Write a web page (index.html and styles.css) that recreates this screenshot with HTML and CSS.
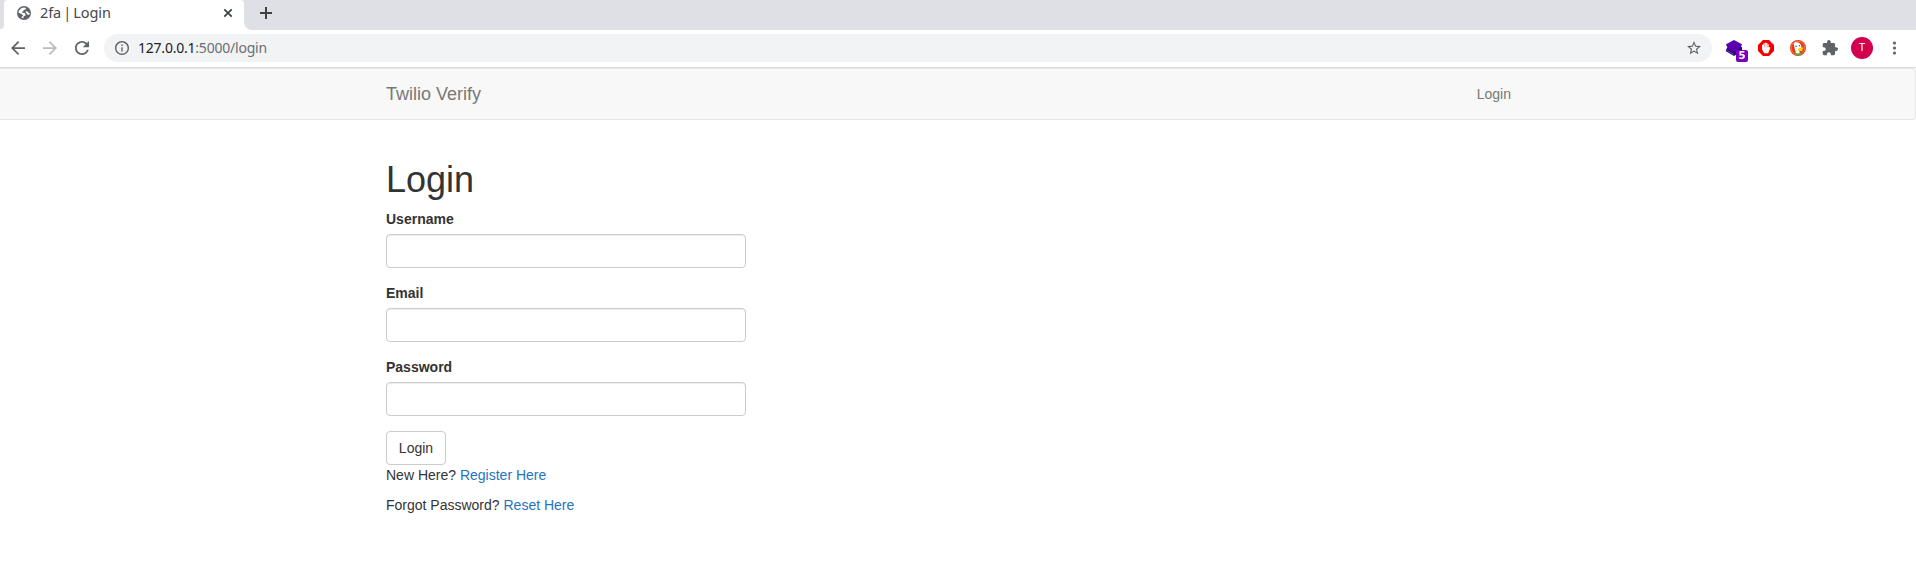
FILE: index.html
```html
<!DOCTYPE html>
<html lang="en">
<head>
<meta charset="utf-8">
<title>2fa | Login</title>
<link rel="stylesheet" href="styles.css">
</head>
<body>
<header class="browser">
  <div class="tabstrip">
    <div class="strip-start"></div>
    <div class="tab">
      <svg class="favicon" viewBox="0 0 14 14"><circle cx="7" cy="7" r="7" fill="#5f6368"/><path fill="#fff" d="M1.400 6.600C1.700 3.900 3.900 1.700 7 1.400L9 2 8.600 3.400 6.600 3.900 6.500 5.300 5 5.800 5.300 6.800 7.600 6.900 8.600 8.300 8.300 9.700 6.800 10.100 6.300 12.300 4.600 12 4.800 10.700 6.200 9.600 4.900 8.300z"/><path fill="#fff" d="M8.300 5.600L10.200 5.200 11.200 6.600 12.700 6.900 12.200 8.900 10.400 8.500 9.300 7.100z"/></svg>
      <span class="tab-title">2fa <i>|</i> Login</span>
      <svg class="tab-close" viewBox="0 0 10 10"><path d="M1.300 1.300l7.400 7.400M8.700 1.300L1.300 8.700" stroke="#3c4043" stroke-width="1.700"/></svg>
    </div>
    <div class="strip-end">
      <svg class="new-tab" viewBox="0 0 12 12"><path d="M6 0v12M0 6h12" stroke="#3c4043" stroke-width="2"/></svg>
    </div>
  </div>
  <div class="toolbar">
    <div class="history">
      <svg viewBox="4 4 16 16"><path fill="#5f6368" d="M20 11H7.830l5.590-5.590L12 4l-8 8 8 8 1.410-1.410L7.830 13H20v-2z"/></svg>
      <svg viewBox="4 4 16 16"><path fill="#babcbe" d="M12 4l-1.410 1.410L16.170 11H4v2h12.170l-5.580 5.590L12 20l8-8z"/></svg>
      <svg viewBox="4 4 16 16"><path fill="#5f6368" d="M17.650 6.350C16.200 4.900 14.210 4 12 4c-4.420 0-7.990 3.580-7.990 8s3.570 8 7.990 8c3.730 0 6.840-2.550 7.730-6h-2.080c-.82 2.330-3.040 4-5.650 4-3.310 0-6-2.690-6-6s2.690-6 6-6c1.660 0 3.140.69 4.220 1.780L13 11h7V4l-2.350 2.350z"/></svg>
    </div>
    <div class="omnibox">
      <svg class="info" viewBox="2 2 20 20"><path fill="#5f6368" d="M11 7h2v2h-2zm0 4h2v6h-2zm1-9C6.480 2 2 6.480 2 12s4.480 10 10 10 10-4.480 10-10S17.520 2 12 2zm0 18c-4.410 0-8-3.590-8-8s3.590-8 8-8 8 3.590 8 8-3.590 8-8 8z"/></svg>
      <span class="url"><b>127.0.0.1</b>:5000/login</span>
      <svg class="star" viewBox="2 2 20 20"><path fill="#5f6368" d="M22 9.240l-7.190-.62L12 2 9.190 8.630 2 9.240l5.460 4.730L5.820 21 12 17.270 18.180 21l-1.630-7.030L22 9.240zM12 15.400l-3.760 2.270 1-4.280-3.320-2.880 4.380-.38L12 6.100l1.710 4.040 4.380.38-3.320 2.880 1 4.280L12 15.400z"/></svg>
    </div>
    <div class="extensions">
      <div class="extension">
        <svg viewBox="0 0 16 16"><path fill="#310080" d="M2 7L0 9.500v1.700L8 16l8-5V7z"/><path fill="#7b45bd" d="M.5 9.800L8 14v.7L.5 10.600z"/><path fill="#5a00b0" d="M8 0l8 4.300L14.500 8 8 11.500 1.500 8 0 4.300z"/></svg>
        <span class="badge">5</span>
      </div>
      <svg viewBox="0 0 16 16"><path fill="#f40000" d="M5 0h6l5 5v6l-5 5H5l-5-5V5z"/><path fill="#fff" d="M6.200 13.200L4 9.200V5q.6-.7 1.200 0V3.800q.7-.8 1.400 0V3q.8-.8 1.500 0v.2q.8-.7 1.400 0v1.200q.7-.7 1.200 0v3.400l1-.9q.8 0 .6.800L10.200 13.200z"/><path d="M6.500 4v3.500M8.100 3.500v4M9.600 4v3.500" stroke="#f66" stroke-width=".5"/></svg>
      <svg viewBox="0 0 16 16"><circle cx="8" cy="8" r="8" fill="#e8390f"/><circle cx="8" cy="8" r="6.800" fill="none" stroke="#f3a085" stroke-width=".6"/><path fill="#fff" d="M3.500 3.400L5.500 2l3.500.8 2 2.200.4 3-2.400 2 1.200 4.300-4 .3L4.800 9z"/><circle cx="6" cy="6.200" r=".7" fill="#345"/><circle cx="9.500" cy="5.700" r=".6" fill="#345"/><path fill="#ffd400" d="M8.300 8.200l5-1v1.600l-1.700.5 1.600.8-1.700 1.200-3.400-.8z"/><path fill="#43b649" d="M6 13l2.300.6 2.300-1.300.3 2.500-2.500.8-2.400-.5z"/></svg>
      <svg class="puzzle" viewBox="1 1 22 22"><path fill="#5f6368" d="M20.500 11H19V7c0-1.100-.9-2-2-2h-4V3.500C13 2.120 11.880 1 10.500 1S8 2.120 8 3.500V5H4c-1.100 0-1.990.9-1.990 2v3.800H3.500c1.490 0 2.700 1.210 2.700 2.700s-1.210 2.700-2.700 2.700H2V20c0 1.100.9 2 2 2h3.800v-1.500c0-1.490 1.210-2.700 2.700-2.700 1.490 0 2.700 1.210 2.700 2.700V22H17c1.100 0 2-.9 2-2v-4h1.500c1.380 0 2.500-1.120 2.500-2.500S21.880 11 20.500 11z"/></svg>
      <span class="avatar">T</span>
      <svg viewBox="0 0 16 16"><g fill="#5f6368"><circle cx="8.500" cy="3" r="1.600"/><circle cx="8.500" cy="8" r="1.600"/><circle cx="8.500" cy="13" r="1.600"/></g></svg>
    </div>
  </div>
</header>
<nav class="navbar">
  <a class="brand">Twilio Verify</a>
  <a class="nav-link">Login</a>
</nav>
<main class="container">
  <h1>Login</h1>
  <form class="form">
    <div class="form-group"><label for="username">Username</label><input id="username" type="text"></div>
    <div class="form-group"><label for="email">Email</label><input id="email" type="text"></div>
    <div class="form-group"><label for="password">Password</label><input id="password" type="password"></div>
    <button class="btn" type="button">Login</button>
  </form>
  <p>New Here? <a class="link">Register Here</a></p>
  <p>Forgot Password? <a class="link">Reset Here</a></p>
</main>
</body>
</html>
```
FILE: styles.css
```css
* { box-sizing: border-box; }
body {
  margin: 0;
  background: #fff;
  color: #333;
  font: 14px/20px "Liberation Sans", Arial, sans-serif;
  overflow: hidden;
}
svg { display: block; flex: none; }

.browser {
  height: 68px;
  border-bottom: 1px solid #d9dadb;
  font-family: "Noto Sans", sans-serif;
}
.tabstrip {
  display: flex;
  height: 30px;
  background: linear-gradient(#dee0e6 8px, #fff 8px);
}
.strip-start { width: 4px; height: 29px; background: #dee0e6; border-radius: 0 0 4px 0; }
.tab {
  display: flex;
  align-items: center;
  width: 240px;
  height: 30px;
  padding: 0 11px 4px 13px;
  background: #fff;
  border-radius: 4px 4px 0 0;
}
.favicon { width: 14px; height: 14px; }
.tab-title { flex: 1; margin: 0 0 2px 9px; font-size: 14.5px; letter-spacing: -.1px; color: #45494d; white-space: nowrap; }
.tab-title i { margin: 0 -1.500px; font-style: normal; }
.tab-close { width: 10px; height: 10px; }
.strip-end { flex: 1; padding: 7px 0 0 16px; background: #dee0e6; border-radius: 0 0 0 8px; }
.new-tab { width: 12px; height: 12px; }

.toolbar { display: flex; align-items: center; height: 36px; }
.history { display: flex; gap: 18px; padding: 0 15px 0 11px; }
.history svg { width: 14px; height: 14px; }
.omnibox {
  display: flex;
  align-items: center;
  flex: 1;
  height: 28px;
  padding: 0 11px;
  border-radius: 14px;
  background: #f1f3f4;
}
.info { width: 14px; height: 14px; }
.url { flex: 1; margin-left: 9px; font-size: 14px; letter-spacing: -.22px; color: #6b6f73; }
.url b { font-weight: 400; color: #202124; }
.star { width: 14px; height: 14px; }
.extensions { display: flex; align-items: center; gap: 16px; padding: 0 14px; }
.extensions svg { width: 16px; height: 16px; }
.extension { position: relative; }
.badge {
  position: absolute;
  left: 10px;
  top: 10px;
  width: 12px;
  height: 12px;
  border-radius: 2px;
  background: #7b00bd;
  color: #fff;
  font: bold 10px/12px "DejaVu Sans", sans-serif;
  text-align: center;
}
.avatar {
  width: 22px;
  height: 22px;
  margin: 0 -3px;
  border-radius: 50%;
  background: #d2004f;
  color: #fff;
  font: 11px/22px Roboto, sans-serif;
  text-align: center;
}

.navbar {
  display: flex;
  justify-content: space-between;
  align-items: center;
  height: 52px;
  padding: 0 404px 0 386px;
  background: #f8f8f8;
  border: solid #e7e7e7;
  border-width: 1px 1px 1px 0;
  border-radius: 0 4px 4px 0;
  color: #777;
}
.brand { font-size: 18px; }
.container { margin-left: 386px; padding-top: 40px; }
h1 { margin: 0 0 9px; font-size: 36px; font-weight: 400; line-height: 40px; }
.form { width: 360px; }
.form-group { margin-bottom: 15px; }
label { display: block; margin-bottom: 5px; font-weight: 700; }
input {
  display: block;
  width: 100%;
  height: 34px;
  padding: 6px 12px;
  border: 1px solid #ccc;
  border-radius: 4px;
  box-shadow: inset 0 1px 1px rgba(0, 0, 0, .075);
}
.btn {
  display: block;
  width: 60px;
  height: 34px;
  padding: 0;
  border: 1px solid #ccc;
  border-radius: 4px;
  background: #fff;
  color: #333;
  font: inherit;
}
p { margin: 0 0 10px; }
.link { color: #2574c0; }
```
